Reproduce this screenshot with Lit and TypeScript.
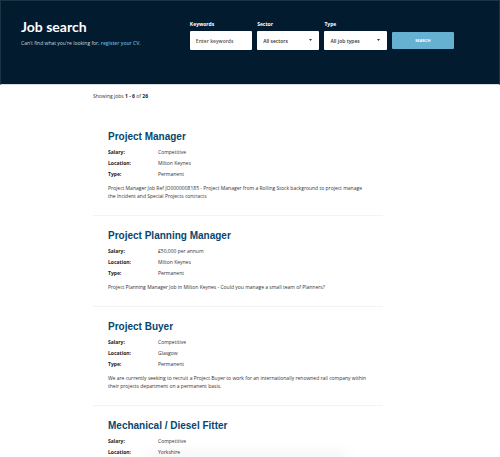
import { LitElement, html, css, nothing } from "lit";
import { customElement, property } from "lit/decorators.js";

interface Job {
  title: string;
  facts: [string, string][];
  summary?: string;
}

const jobs: Job[] = [
  {
    title: "Project Manager",
    facts: [["Salary", "Competitive"], ["Location", "Milton Keynes"], ["Type", "Permanent"]],
    summary:
      "Project Manager Job Ref JO0000008185 - Project Manager from a Rolling Stock background to project manage the Incident and Special Projects contracts",
  },
  {
    title: "Project Planning Manager",
    facts: [["Salary", "£50,000 per annum"], ["Location", "Milton Keynes"], ["Type", "Permanent"]],
    summary: "Project Planning Manager Job in Milton Keynes - Could you manage a small team of Planners?",
  },
  {
    title: "Project Buyer",
    facts: [["Salary", "Competitive"], ["Location", "Glasgow"], ["Type", "Permanent"]],
    summary:
      "We are currently seeking to recruit a Project Buyer to work for an internationally renowned rail company within their projects department on a permanent basis.",
  },
  {
    title: "Mechanical / Diesel Fitter",
    facts: [["Salary", "Competitive"], ["Location", "Yorkshire"]],
  },
];

@customElement("job-search-bar")
export class JobSearchBar extends LitElement {
  static styles = css`
    :host { display: block; }
    .bar {
      box-sizing: border-box;
      display: grid;
      grid-template-columns: 39fr 61fr;
      align-items: start;
      min-height: 85px;
      padding: 19px 45px 19px 20px;
      background: #021b2e;
      color: #fff;
      border: 1px solid #1b3343;
      border-bottom-color: #d3dce2;
    }
    .title { margin: 0 0 5px; font: 700 14px/14px Lato, sans-serif; }
    .hint { margin: 0; font-size: 5px; line-height: 8px; color: #d0d6da; }
    .link { color: #66b0d2; font-weight: 600; text-decoration: none; }
    .form { display: grid; grid-template-columns: repeat(4, 1fr); gap: 5px; align-items: end; }
    .field { display: grid; gap: 3px; min-width: 0; }
    .label { font: 700 5px/8px "Open Sans", sans-serif; }
    .control, .submit {
      box-sizing: border-box;
      width: 100%;
      height: 19px;
      margin: 0;
      border: 0;
      border-radius: 1px;
      font: 600 5px/8px "Open Sans", sans-serif;
    }
    .control { padding: 0 6px; background: #fff; color: #333; appearance: none; }
    .control::placeholder { color: #555; opacity: 1; }
    .picker { position: relative; display: grid; }
    .arrow { position: absolute; right: 7px; top: 8px; width: 3px; height: 2px; pointer-events: none; }
    .submit {
      height: 17px;
      margin: 1px 0;
      padding: 0;
      background: #66b0d2;
      color: #fff;
      font-size: 4px;
      font-weight: 700;
      text-align: center;
    }
  `;

  private picker(id: string, label: string, option: string) {
    return html`<div class="field">
      <label class="label" for=${id}>${label}</label>
      <div class="picker">
        <select class="control" id=${id}><option>${option}</option></select>
        <svg class="arrow" viewBox="0 0 3 2" aria-hidden="true"><path d="M0 0h3L1.5 2z" fill="#073f68" /></svg>
      </div>
    </div>`;
  }

  render() {
    return html`<header class="bar">
      <div>
        <h1 class="title">Job search</h1>
        <p class="hint">Can't find what you're looking for, <a class="link" href="#register">register your CV</a>.</p>
      </div>
      <form class="form" @submit=${(e: Event) => e.preventDefault()}>
        <div class="field">
          <label class="label" for="keywords">Keywords</label>
          <input class="control" id="keywords" type="text" placeholder="Enter keywords" />
        </div>
        ${this.picker("sector", "Sector", "All sectors")}
        ${this.picker("type", "Type", "All job types")}
        <button class="submit" type="submit">SEARCH</button>
      </form>
    </header>`;
  }
}

@customElement("job-card")
export class JobCard extends LitElement {
  @property({ attribute: false }) job!: Job;

  static styles = css`
    :host { display: block; }
    .card { padding: 13px 15px 15px; border-bottom: 1px solid #f3f3f3; }
    :host(:last-of-type) .card { padding-bottom: 0; border-bottom: 0; }
    .title { margin: 0 0 3px; font: 700 10px/14px "Liberation Sans", sans-serif; color: #07466f; }
    .facts { display: grid; grid-template-columns: 50px 1fr; margin: 0; line-height: 11px; }
    .term { font-weight: 700; color: #222; }
    .value { margin: 0; }
    .summary { margin: 4px 0 0; line-height: 8px; }
  `;

  render() {
    const { title, facts, summary } = this.job;
    return html`<article class="card">
      <h2 class="title">${title}</h2>
      <dl class="facts">
        ${facts.map(([term, value]) => html`<dt class="term">${term}:</dt><dd class="value">${value}</dd>`)}
      </dl>
      ${summary ? html`<p class="summary">${summary}</p>` : nothing}
    </article>`;
  }
}

@customElement("app-root")
export class AppRoot extends LitElement {
  static styles = css`
    :host {
      display: block;
      position: relative;
      min-height: 100vh;
      overflow: hidden;
      background: #fff;
      color: #333;
      font: 400 5px/8px "Open Sans", sans-serif;
    }
    .results { width: 58%; margin: 0 auto; padding: 7px 24px 0 0; }
    .count { margin: 0 0 17px; }
    .strong { color: #222; }
    .shade {
      position: absolute;
      left: 30%;
      right: 31%;
      bottom: -2px;
      height: 2px;
      box-shadow: 0 0 16px 2px rgba(0, 0, 0, 0.11);
      pointer-events: none;
    }
  `;

  render() {
    return html`
      <job-search-bar></job-search-bar>
      <main class="results">
        <p class="count">Showing jobs <b class="strong">1 - 6</b> of <b class="strong">26</b></p>
        ${jobs.map((job) => html`<job-card .job=${job}></job-card>`)}
      </main>
      <div class="shade"></div>
    `;
  }
}
